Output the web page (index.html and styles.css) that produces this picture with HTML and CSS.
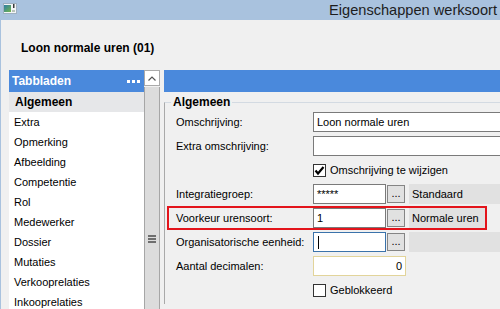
FILE: index.html
```html
<!DOCTYPE html>
<html lang="nl">
<head>
  <meta charset="UTF-8" />
  <title>Eigenschappen werksoort</title>
  <link rel="stylesheet" href="styles.css">
</head>
<body>
  <div class="window">
    <div class="titlebar">
      <svg class="app-icon" width="14" height="11" viewBox="0 0 14 11">
        <defs>
          <linearGradient id="ico" x1="0" y1="0" x2="1" y2="1">
            <stop offset="0" stop-color="#2d7fa6"/>
            <stop offset="1" stop-color="#74b54a"/>
          </linearGradient>
        </defs>
        <rect x="0.5" y="0.5" width="13" height="10" fill="#f3f5f6" stroke="#9fb0c0"/>
        <rect x="1" y="2" width="7" height="7" fill="url(#ico)"/>
        <rect x="10" y="1" width="1.5" height="4" fill="#3a3a3a"/>
        <rect x="9" y="7" width="3" height="2" fill="#b9c2b9"/>
      </svg>
      <span class="title">Eigenschappen werksoort</span>
    </div>

    <div class="content">
      <h1 class="record">Loon normale uren (01)</h1>

      <div class="main">
        <div class="tabs">
          <div class="tabs-head">
            <span>Tabbladen</span>
            <span class="dots"><i></i><i></i><i></i></span>
          </div>
          <ul class="tab-list">
            <li class="active">Algemeen</li>
            <li>Extra</li>
            <li>Opmerking</li>
            <li>Afbeelding</li>
            <li>Competentie</li>
            <li>Rol</li>
            <li>Medewerker</li>
            <li>Dossier</li>
            <li>Mutaties</li>
            <li>Verkooprelaties</li>
            <li>Inkooprelaties</li>
          </ul>
        </div>

        <div class="scrollbar">
          <div class="sb-up">
            <svg width="8" height="5" viewBox="0 0 8 5"><polyline points="0.5,4.5 4,1 7.5,4.5" fill="none" stroke="#555" stroke-width="1.2"/></svg>
          </div>
          <div class="sb-thumb"><span class="grip"><i></i><i></i><i></i></span></div>
        </div>

        <div class="panel">
          <div class="panel-head"></div>
          <fieldset class="group">
            <legend>Algemeen</legend>
            <div class="rows">
              <div class="row">
                <span class="label">Omschrijving:</span>
                <div class="field wide">Loon normale uren</div>
              </div>
              <div class="row">
                <span class="label">Extra omschrijving:</span>
                <div class="field wide"></div>
              </div>
              <div class="row">
                <span class="label"></span>
                <span class="check on">
                  <svg width="11" height="11" viewBox="0 0 11 11"><path d="M1.5 5.5 L4 8.5 L9.5 2" fill="none" stroke="#000" stroke-width="2.2"/></svg>
                </span>
                <span class="check-text">Omschrijving te wijzigen</span>
              </div>
              <div class="row">
                <span class="label">Integratiegroep:</span>
                <div class="field short">*****</div>
                <button class="lookup">...</button>
                <span class="info">Standaard</span>
              </div>
              <div class="row marked">
                <span class="label">Voorkeur urensoort:</span>
                <div class="field short">1</div>
                <button class="lookup">...</button>
                <span class="info">Normale uren</span>
              </div>
              <div class="row">
                <span class="label">Organisatorische eenheid:</span>
                <div class="field short focus"><span class="caret"></span></div>
                <button class="lookup">...</button>
                <span class="info"></span>
              </div>
              <div class="row">
                <span class="label">Aantal decimalen:</span>
                <div class="field number">0</div>
              </div>
              <div class="row">
                <span class="label"></span>
                <span class="check"></span>
                <span class="check-text">Geblokkeerd</span>
              </div>
            </div>
          </fieldset>
        </div>
      </div>
    </div>
  </div>
</body>
</html>
```

FILE: styles.css
```css
body {
  margin: 0;
  width: 500px;
  height: 309px;
  overflow: hidden;
  font-family: "Liberation Sans", Arial, sans-serif;
  font-size: 11px;
  color: #000;
}
.window {
  width: 500px;
  height: 309px;
  display: flex;
  flex-direction: column;
  background-color: #f0f0f0;
}
.titlebar {
  height: 20px;
  flex-shrink: 0;
  background-color: #a9c2de;
  display: flex;
  align-items: flex-start;
  justify-content: space-between;
  padding: 0 3px;
}
.app-icon {
  margin-top: 3px;
}
.title {
  font-size: 14.6px;
  line-height: 20px;
  color: #1d1d1d;
}
.content {
  flex: 1;
  min-height: 0;
  border-left: 1px solid #a9c2de;
  display: flex;
  flex-direction: column;
}
.record {
  margin: 0;
  padding: 21px 0 0 20px;
  font-size: 12px;
  line-height: 14px;
  font-weight: bold;
}
.main {
  flex: 1;
  min-height: 0;
  margin-top: 15px;
  padding-left: 8px;
  display: flex;
}

/* tab list */
.tabs {
  width: 135px;
  display: flex;
  flex-direction: column;
}
.tabs-head {
  height: 22px;
  flex-shrink: 0;
  background-color: #4a89dc;
  color: #fff;
  font-size: 12px;
  font-weight: bold;
  display: flex;
  align-items: center;
  justify-content: space-between;
  padding: 0 4px 0 3px;
}
.dots {
  display: flex;
  gap: 2px;
  margin-top: 1px;
}
.dots i {
  width: 3px;
  height: 3px;
  background-color: #fff;
}
.tab-list {
  flex: 1 0 auto;
  margin: 0;
  padding: 0;
  list-style: none;
  background-color: #fff;
}
.tab-list li {
  height: 20px;
  line-height: 20px;
  padding-left: 5px;
}
.tab-list li.active {
  background-color: #e6e7e9;
  font-size: 12px;
  font-weight: bold;
  padding-left: 6px;
}

/* scrollbar */
.scrollbar {
  width: 16px;
  display: flex;
  flex-direction: column;
}
.sb-up {
  height: 16px;
  flex-shrink: 0;
  box-sizing: border-box;
  background-color: #fff;
  border: 1px solid #aaa;
  display: flex;
  align-items: center;
  justify-content: center;
}
.sb-thumb {
  flex: 1;
  margin-top: 1px;
  background-color: #dcdcdc;
  border-left: 1px solid #a6a6a6;
  border-right: 1px solid #a6a6a6;
  display: flex;
  justify-content: center;
}
.grip {
  margin-top: 148px;
  display: flex;
  flex-direction: column;
  gap: 1px;
}
.grip i {
  width: 8px;
  height: 2px;
  background-color: #6e6e6e;
}

/* right panel */
.panel {
  flex: 1;
  min-width: 0;
  margin-left: 4px;
  overflow: hidden;
}
.panel-head {
  height: 22px;
  background-color: #4a89dc;
}
.group {
  margin: 4px 0 0 0;
  padding: 0;
  min-width: 0;
  border: none;
  border-top: 1px solid #d3dae2;
  border-left: 1px solid #a9a9a9;
}
.group legend {
  margin-left: 6px;
  padding: 0 2px;
  font-size: 12px;
  line-height: 13px;
  font-weight: bold;
}
.rows {
  padding-top: 3px;
}
.row {
  height: 20px;
  margin-bottom: 4px;
  padding-left: 11px;
  display: flex;
  align-items: center;
}
.row.marked {
  margin: 0 15px 4px 4px;
  padding-left: 7px;
  outline: 2px solid #e3141b;
}
.label {
  width: 137px;
  flex-shrink: 0;
}
.field {
  height: 20px;
  box-sizing: border-box;
  flex-shrink: 0;
  background-color: #fff;
  border: 1px solid #7a7a7a;
  padding: 0 3px;
  line-height: 18px;
  white-space: nowrap;
}
.field.wide {
  width: 220px;
}
.field.short {
  width: 73px;
}
.field.focus {
  border-color: #3b73ab;
  display: flex;
  align-items: center;
}
.caret {
  width: 1px;
  height: 13px;
  margin-left: 1px;
  background-color: #000;
}
.field.number {
  width: 93px;
  border-color: #e2d49a;
  text-align: right;
}
.lookup {
  width: 18px;
  height: 18px;
  margin-left: 1px;
  padding: 0 0 3px;
  flex-shrink: 0;
  box-sizing: border-box;
  background-color: #e1e1e1;
  border: 1px solid #858585;
  font-family: inherit;
  font-size: 11px;
  line-height: 11px;
  display: flex;
  align-items: flex-end;
  justify-content: center;
}
.info {
  flex: 1;
  height: 20px;
  margin-left: 4px;
  padding-left: 3px;
  line-height: 20px;
  background-color: #e1e1e1;
}
.check {
  width: 13px;
  height: 13px;
  box-sizing: border-box;
  flex-shrink: 0;
  background-color: #fff;
  border: 1px solid #333;
  display: flex;
  align-items: center;
  justify-content: center;
}
.check-text {
  margin-left: 4px;
}
```
